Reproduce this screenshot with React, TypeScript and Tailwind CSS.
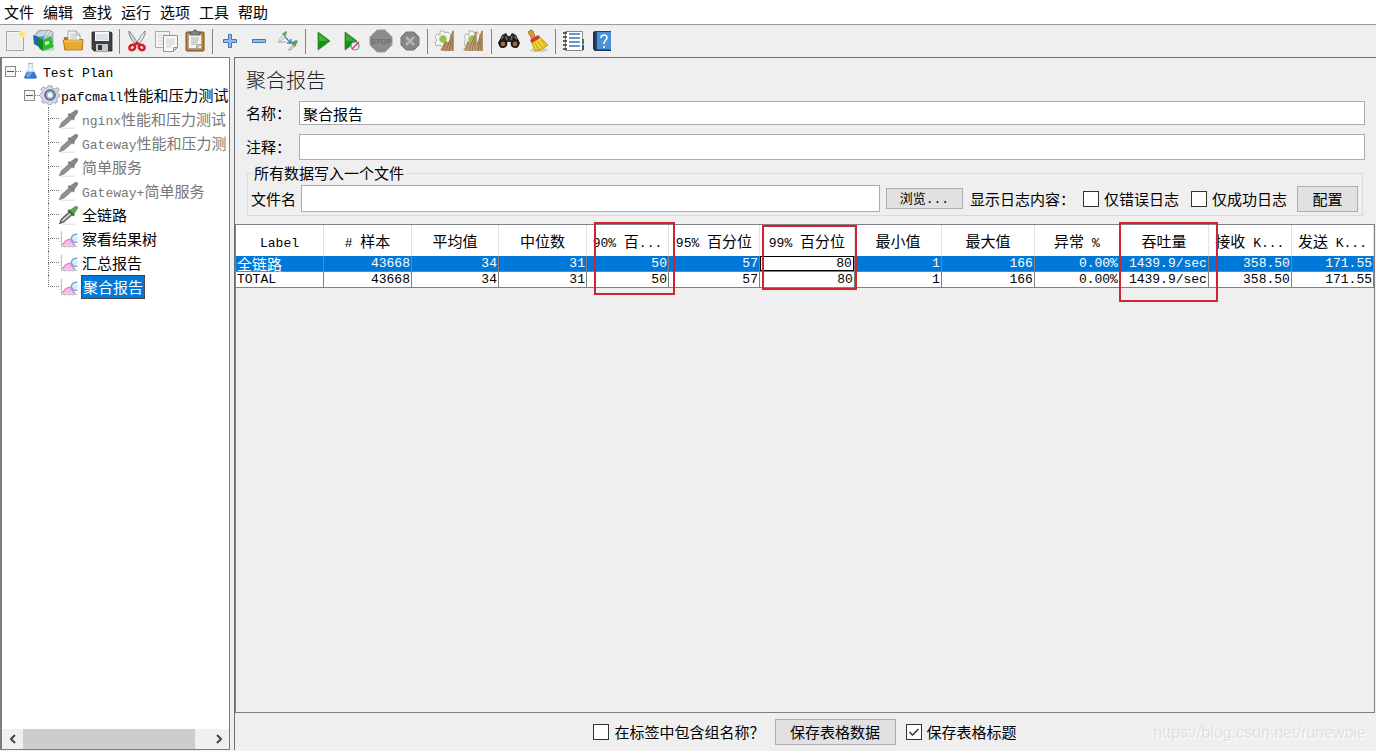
import React from 'react';

type IconProps = { children: React.ReactNode; className?: string };

const Icon: React.FC<IconProps> = ({ children, className = 'size-6' }) => (
  <svg viewBox="0 0 24 24" className={`${className} shrink-0`} fill="none" aria-hidden="true">
    {children}
  </svg>
);

// Latin runs are monospaced and a bit smaller than the Chinese glyphs
const Mixed: React.FC<{ text: string }> = ({ text }) => (
  <>
    {text.split(/([\x20-\x7e]+)/).map((part, i) =>
      i % 2 ? (
        <span key={i} className="font-['Liberation_Mono',monospace] text-[13px] leading-none">{part}</span>
      ) : (
        part
      )
    )}
  </>
);

const NewIcon = () => (
  <Icon>
    <path d="M3.500 2.500h17v19h-17z" fill="#f4f4f4" stroke="#a3a5a3" />
    <path d="M5 4h14v16H5z" fill="#ececec" />
    <circle cx="19" cy="5" r="3.500" fill="#f7ef9a" />
    <path d="M19 2l1 2 2 1-2 1-1 2-1-2-2-1 2-1z" fill="#efe06a" />
  </Icon>
);

const TemplatesIcon = () => (
  <Icon>
    <ellipse cx="15" cy="20" rx="8" ry="2" fill="#d0d4d0" />
    <path d="M3 6l3-4 4-1 2 1 4-1 5 2v11H4z" fill="#b9c7d2" stroke="#7b8e9e" strokeWidth=".7" />
    <path d="M6 7l4-5M9 7l4-5M14 6l3-4M17 7l3-4" stroke="#eef3f6" />
    <path d="M1 6l6 2v10l-5-3z" fill="#1c6dae" />
    <path d="M7 8l5-1v9l-5 2z" fill="#3f9bdc" />
    <path d="M6 8l5 3v11l-4-3z" fill="#168a18" />
    <path d="M11 11l8-4 3 11-11 4z" fill="#31bd31" />
    <path d="M13 13l4-1v3l-4 1z" fill="#d5f7ca" />
  </Icon>
);

const OpenIcon = () => (
  <Icon>
    <path d="M3 8h6l2 2h11v11H3z" fill="#b47a19" />
    <path d="M7 2h8l4 4v9H7z" fill="#fafafa" stroke="#929292" strokeWidth=".8" />
    <path d="M9 5h5M9 7h7M9 9h7" stroke="#a9b0b5" strokeWidth=".8" />
    <path d="M15 2v4h4" stroke="#929292" strokeWidth=".8" />
    <path d="M2 11h20l-1 10H4z" fill="#e7ab35" stroke="#b67818" strokeWidth=".8" />
    <path d="M3 12h18" stroke="#f9d579" />
  </Icon>
);

const SaveIcon = () => (
  <Icon>
    <path d="M2 3h19l1 1v18H4l-2-2z" fill="#3d3f43" stroke="#24262a" strokeWidth=".8" />
    <path d="M5 3h14v9H5z" fill="#f5f7f8" />
    <path d="M6 6h12M6 8h12M6 10h12" stroke="#b6bec4" strokeWidth=".8" />
    <path d="M6 15h12v7H6z" fill="#c6c9cb" />
    <path d="M8 16h4v5H8z" fill="#313439" />
  </Icon>
);

const CutIcon = () => (
  <Icon>
    <path d="M4 2q-1 5 7 14l2-1Q8 6 4 2z" fill="#d9dbdc" stroke="#737678" strokeWidth=".9" />
    <path d="M20 2q1 5-7 14l-2-1Q16 6 20 2z" fill="#eff0f0" stroke="#737678" strokeWidth=".9" />
    <ellipse cx="7" cy="18.500" rx="3" ry="2.500" stroke="#d61f22" strokeWidth="2.600" transform="rotate(-35 7 18)" />
    <ellipse cx="17" cy="18.500" rx="3" ry="2.500" stroke="#d61f22" strokeWidth="2.600" transform="rotate(35 17 18)" />
    <path d="M9 16l3-2 3 2" stroke="#d61f22" strokeWidth="2.400" />
  </Icon>
);

const CopyIcon = () => (
  <Icon>
    <path d="M1.500 2.500h14v16h-14z" fill="#f5f5f5" stroke="#aaa" />
    <path d="M4 6h9M4 9h9M4 12h5M4 15h5" stroke="#cfcfcf" />
    <path d="M9.500 6.500h14v12l-4 4h-10z" fill="#f8f8f8" stroke="#929492" />
    <path d="M12 10h9M12 12h9M12 14h9M12 16h7M12 18h5" stroke="#c2c5c4" strokeWidth=".8" />
    <path d="M19.500 22v-3.500h4z" fill="#ddd" stroke="#929492" />
  </Icon>
);

const PasteIcon = () => (
  <Icon>
    <rect x="3" y="3" width="18" height="19" rx="1" fill="#c08334" stroke="#7a4c18" />
    <path d="M5.500 5.500h13v14h-13z" fill="#f4f4f2" stroke="#9d9b92" strokeWidth=".7" />
    <path d="M8 9h8M8 11h8M8 13h7M8 15h5" stroke="#a9afab" />
    <path d="M13.500 19.500v-4h5z" fill="#cfd1cd" stroke="#8b8d87" strokeWidth=".7" />
    <path d="M7 3h3l1-2h2l1 2h3v3H7z" fill="#858985" stroke="#4e514f" strokeWidth=".8" />
  </Icon>
);

const PlusIcon = () => (
  <Icon>
    <path d="M10.500 5.500h3v5h5v3h-5v5h-3v-5h-5v-3h5z" fill="#91bce8" stroke="#3f76b9" />
  </Icon>
);

const MinusIcon = () => (
  <Icon>
    <path d="M5.500 10.500h13v3h-13z" fill="#91bce8" stroke="#3f76b9" />
  </Icon>
);

const ToggleIcon = () => (
  <Icon>
    <path d="M2 12l6-7 2 2-6 6z" fill="#dce8df" stroke="#9cada1" strokeWidth=".7" />
    <path d="M7 4l3-2 1 1-1 4-1 1-3-3z" fill="#6aa66c" />
    <path d="M12 21l6-7 2 2-5 5z" fill="#c8d4ca" stroke="#9cada1" strokeWidth=".7" />
    <path d="M16 13l4-2 2 1-2 4-1 2-4-4z" fill="#5d9e5c" />
    <path d="M2 13h8" stroke="#9ba7a0" />
    <path d="M9 8l6 6M15 10v4h-4" stroke="#397cc6" strokeWidth="1.400" />
  </Icon>
);

const StartIcon = () => (
  <Icon>
    <path d="M7 3l12 9-12 9z" fill="#11950f" stroke="#267b28" strokeWidth=".7" />
    <path d="M8 5l9 7H8z" fill="#42b33d" />
  </Icon>
);

const StartNoPauseIcon = () => (
  <Icon>
    <path d="M5 3l12 9-12 9z" fill="#11950f" stroke="#267b28" strokeWidth=".7" />
    <path d="M6 5l9 7H6z" fill="#3fa642" />
    <circle cx="15" cy="17" r="4" fill="#e9edf5" stroke="#728bb5" strokeWidth="1.200" />
    <path d="M12 20l7-7" stroke="#dc3c35" strokeWidth="1.500" />
  </Icon>
);

const StopIcon = () => (
  <Icon>
    <path d="M8 1h8l7 7v8l-7 7H8l-7-7V8z" fill="#8c8c8c" stroke="#9c9c9c" />
    <text x="12" y="15" fontSize="8" fontWeight="700" textAnchor="middle" fill="#6c6c6c" fontFamily="Liberation Sans">STOP</text>
  </Icon>
);

const ShutdownIcon = () => (
  <Icon>
    <path d="M8 3h8l5 5v8l-5 5H8l-5-5V8z" fill="#858585" stroke="#777" />
    <path d="M8 8l8 8M16 8l-8 8" stroke="#b2b2b2" strokeWidth="2.600" />
  </Icon>
);

const ClearIcon: React.FC<{ all?: boolean }> = ({ all }) => (
  <Icon>
    <path
      d="M7 2h4l1 2 3-1 3 3-1 3 2 2-2 4-3 1-1 3-4-1-2-2-4 1-1-4 2-2-2-3 2-3 3 1z"
      fill="#f6f6f4"
      stroke="#a9aaa6"
      strokeWidth=".9"
    />
    <circle cx="10" cy="10" r="3.500" fill="#8cc63f" stroke="#b4cf8c" />
    <path d="M11 12l5 1 4-12 1 1v20H10l-3-1q3-3 4-9z" fill="#b9936a" />
    <path d="M10 21l3-8M13 22l3-9M16 22l2-10M19 21V8M16 13l4-11" stroke="#896647" strokeWidth=".8" />
    {all && (
      <>
        <path d="M5 12l5 1 4-11 1 1v19H4l-3-1q3-3 4-9z" fill="#c2a07a" />
        <path d="M4 21l3-8M7 22l3-9M10 22l2-10M13 21V8M10 13l4-10" stroke="#906b4a" strokeWidth=".8" />
      </>
    )}
  </Icon>
);

const SearchIcon = () => (
  <Icon>
    <path d="M5 6l4-2 2 3h2l2-3 4 2 4 8-3 5-5-2-1-4h-4l-1 4-5 2-3-5z" fill="#292929" />
    <path d="M6 7l-2 5M18 7l2 5M9 7l1 4M15 7l-1 4" stroke="#747474" strokeWidth="1.300" />
    <circle cx="6" cy="14.500" r="4" fill="#242424" stroke="#111" />
    <circle cx="18" cy="14.500" r="4" fill="#242424" stroke="#111" />
    <circle cx="6" cy="15" r="2.200" fill="#a46e42" />
    <circle cx="18" cy="15" r="2.200" fill="#a46e42" />
  </Icon>
);

const BroomIcon = () => (
  <Icon>
    <ellipse cx="13" cy="21" rx="9" ry="2" fill="#cfcfcf" />
    <path d="M2 3l3-2 2 1 2 6-3 2z" fill="#d89a36" stroke="#996018" strokeWidth=".8" />
    <path d="M5 12l8-5 9 9q-6 6-13 6z" fill="#eed132" stroke="#b58a14" strokeWidth=".8" />
    <path d="M4 11l8-5 2 3-8 5z" fill="#cf392c" />
    <path d="M9 14l4 7M12 13l5 6M15 11l5 6" stroke="#b49319" strokeWidth=".8" />
  </Icon>
);

const FunctionIcon = () => (
  <Icon>
    <path d="M4.500 2.500h17v19h-17z" fill="#fff" stroke="#888" />
    <path d="M8 5h11M8 9h11M8 13h11M8 17h11" stroke="#3975b8" strokeWidth="1.500" />
    <path d="M2 4h4M2 8h4M2 12h4M2 16h4M2 20h4" stroke="#333" strokeWidth="1.300" />
    <path d="M21 10h2v5h-2z" fill="#259036" />
    <path d="M21 16h2v5h-2z" fill="#195ca6" />
  </Icon>
);

const HelpIcon = () => (
  <Icon>
    <path d="M3 3l2-1h16v20H5l-2-2z" fill="#214366" />
    <path d="M7 3h14v18H7z" fill="#4d90d9" />
    <path d="M4 3v17M4 21h17" stroke="#192f47" />
    <path d="M11 9q0-3 3-3 3 0 3 3 0 1-2 3-1 1-1 3M14 17v2" stroke="#fff" strokeWidth="1.600" />
  </Icon>
);

const FlaskIcon = () => (
  <Icon className="h-5 w-[15px]">
    <path d="M9 0h6v8l7 14q0 2-3 2H5q-3 0-3-2L9 8z" fill="#edf4f8" stroke="#a7b9c5" />
    <path d="M6 13h12l4 9q0 2-3 2H5q-3 0-3-2z" fill="#2c7bd0" />
    <path d="M7 14h8l-4 7H5z" fill="#67aae8" />
    <path d="M8 0h8" stroke="#a7b9c5" strokeWidth="2" />
  </Icon>
);

const GearIcon = () => (
  <Icon className="size-5">
    <path
      d="M10 1h4l1 3 3 1 3-2 2 3-2 3 1 2 2 1v2l-3 1-1 2 1 3-2 2-3-1-2 1-1 2h-3l-1-2-2-1-3 1-2-2 1-3-1-2-3-1v-3l3-1 1-2-2-3 3-3 3 2 2-1z"
      fill="#d5d9df"
      stroke="#8f98a5"
    />
    <circle cx="12" cy="12" r="6" fill="#9dadc4" stroke="#526b91" strokeWidth="2" />
    <circle cx="12" cy="12" r="3" fill="#f8fafe" />
  </Icon>
);

const PipetteIcon: React.FC<{ off?: boolean }> = ({ off }) => (
  <Icon className="size-5">
    <path d="M3 23h16" stroke="#e3e3e3" strokeWidth="1.500" />
    <path d="M1 22l2-5L13 8l3 3L6 20z" fill={off ? '#929292' : '#c8cec9'} stroke={off ? '#888' : '#525852'} strokeWidth="1.500" />
    <path d="M12 6l2-1 6-4q3 0 3 3l-4 6-1 3z" fill={off ? '#858585' : '#5ba64b'} />
    <path d="M11 6l7 7" stroke={off ? '#858585' : '#356c2e'} strokeWidth="2.500" />
  </Icon>
);

const ReportIcon = () => (
  <Icon className="size-5">
    <path d="M4 20q1-6 4-5 4-5 6-2l7 7z" fill="#f4bce9" />
    <path d="M22 6q-7 0-7 5 0 4 5 5h2z" fill="#d8effb" />
    <path d="M22 6q-7 0-7 5 0 4 5 5h2" stroke="#6da3da" strokeWidth="1.500" />
    <path d="M4 19l4-5 5-2 6 8" stroke="#d87bc9" strokeWidth="1.500" />
    <path d="M3 2v19h19" stroke="#b3b3bb" />
    <path d="M1 5h2M1 10h2M1 15h2M7 21v2M12 21v2M17 21v2" stroke="#c4c4cb" />
  </Icon>
);

const toolGroups: { label: string; icon: React.ReactNode }[][] = [
  [
    { label: '新建', icon: <NewIcon /> },
    { label: '模板', icon: <TemplatesIcon /> },
    { label: '打开', icon: <OpenIcon /> },
    { label: '保存', icon: <SaveIcon /> },
  ],
  [
    { label: '剪切', icon: <CutIcon /> },
    { label: '复制', icon: <CopyIcon /> },
    { label: '粘贴', icon: <PasteIcon /> },
  ],
  [
    { label: '展开', icon: <PlusIcon /> },
    { label: '折叠', icon: <MinusIcon /> },
    { label: '切换', icon: <ToggleIcon /> },
  ],
  [
    { label: '启动', icon: <StartIcon /> },
    { label: '不停顿开始', icon: <StartNoPauseIcon /> },
    { label: '停止', icon: <StopIcon /> },
    { label: '关闭', icon: <ShutdownIcon /> },
  ],
  [
    { label: '清除', icon: <ClearIcon /> },
    { label: '清除全部', icon: <ClearIcon all /> },
  ],
  [
    { label: '查找', icon: <SearchIcon /> },
    { label: '重置查找', icon: <BroomIcon /> },
  ],
  [
    { label: '函数助手', icon: <FunctionIcon /> },
    { label: '帮助', icon: <HelpIcon /> },
  ],
];

const menus = ['文件', '编辑', '查找', '运行', '选项', '工具', '帮助'];

const treeItems = [
  { text: 'nginx性能和压力测试', icon: <PipetteIcon off />, off: true },
  { text: 'Gateway性能和压力测', icon: <PipetteIcon off />, off: true },
  { text: '简单服务', icon: <PipetteIcon off />, off: true },
  { text: 'Gateway+简单服务', icon: <PipetteIcon off />, off: true },
  { text: '全链路', icon: <PipetteIcon /> },
  { text: '察看结果树', icon: <ReportIcon /> },
  { text: '汇总报告', icon: <ReportIcon /> },
  { text: '聚合报告', icon: <ReportIcon />, selected: true },
];

const columns = [
  { title: 'Label', width: 88 },
  { title: '# 样本', width: 88 },
  { title: '平均值', width: 87 },
  { title: '中位数', width: 88 },
  { title: '90% 百...', width: 82, mark: '-top-[3px] left-[7px] h-[73px] w-[81px]' },
  { title: '95% 百分位', width: 91 },
  { title: '99% 百分位', width: 95, mark: 'top-0 left-0.5 h-[65px] w-[95px]' },
  { title: '最小值', width: 87 },
  { title: '最大值', width: 93 },
  { title: '异常 %', width: 85 },
  { title: '吞吐量', width: 89, mark: '-top-[3px] -left-px h-20 w-[99px]' },
  { title: '接收 K...', width: 83 },
  { title: '发送 K...', width: 82 },
];
const totalWidth = columns.reduce((sum, c) => sum + c.width, 0);

const values = ['43668', '34', '31', '50', '57', '80', '1', '166', '0.00%', '1439.9/sec', '358.50', '171.55'];
const rows = [
  ['全链路', ...values],
  ['TOTAL', ...values],
];

const Expander = () => (
  <button
    type="button"
    aria-label="折叠"
    className="flex size-[11px] shrink-0 items-center justify-center border border-[#8c8c8c] bg-[#f5f5f5]"
  >
    <span className="h-px w-[7px] bg-[#3f5ea0]" />
  </button>
);

const Check: React.FC<{ label: string; checked?: boolean }> = ({ label, checked }) => (
  <label className="flex shrink-0 items-center gap-[5px]">
    <span className="relative flex size-4">
      <input
        type="checkbox"
        defaultChecked={checked}
        className="peer size-4 appearance-none border border-[#333] bg-white"
      />
      <svg viewBox="0 0 16 16" className="pointer-events-none absolute inset-0 hidden size-4 peer-checked:block" fill="none">
        <path d="M3.500 8l3 3 6-6" stroke="#333" strokeWidth="1.500" />
      </svg>
    </span>
    {label}
  </label>
);

const Tree = () => (
  <aside className="flex w-[230px] shrink-0 flex-col border border-l-2 border-[#7a7a80] bg-white">
    <div className="min-h-0 flex-1 overflow-hidden pt-px whitespace-nowrap">
      <div className="flex h-6 items-center pl-[3px]">
        <Expander />
        <span className="mr-0.5 w-[5px] shrink-0 border-t border-dotted border-[#777]" />
        <FlaskIcon />
        <span className="pl-[5px]"><Mixed text="Test Plan" /></span>
      </div>
      <div className="flex h-6 items-center pl-[22px]">
        <Expander />
        <span className="w-[5px] shrink-0 border-t border-dotted border-[#777]" />
        <GearIcon />
        <span className="pl-px"><Mixed text="pafcmall性能和压力测试" /></span>
      </div>
      {treeItems.map((item, i) => (
        <div key={item.text} className="flex h-6 items-center pl-[46px]">
          <span className="flex w-[11px] shrink-0 flex-col self-stretch">
            <span className="h-1/2 border-b border-l border-dotted border-[#777]" />
            {i < treeItems.length - 1 && <span className="h-1/2 border-l border-dotted border-[#777]" />}
          </span>
          {item.icon}
          <span
            className={
              item.selected
                ? 'ml-0.5 flex h-6 items-center border border-dotted border-[#333] bg-[#0078d7] px-px text-white'
                : item.off
                  ? 'pl-[3px] text-[#777]'
                  : 'pl-[3px]'
            }
          >
            <Mixed text={item.text} />
          </span>
        </div>
      ))}
    </div>
    <div className="flex h-5 items-center bg-[#f0f0f0]">
      <button type="button" aria-label="向左滚动" className="flex w-[21px] justify-center">
        <svg viewBox="0 0 8 10" className="h-2.5 w-2" fill="none"><path d="M6 1L2 5l4 4" stroke="#444" strokeWidth="2" /></svg>
      </button>
      <div className="flex h-full flex-1">
        <div className="h-full w-[172px] bg-[#cdcdcd]" />
      </div>
      <button type="button" aria-label="向右滚动" className="flex w-[21px] justify-center">
        <svg viewBox="0 0 8 10" className="h-2.5 w-2" fill="none"><path d="M2 1l4 4-4 4" stroke="#444" strokeWidth="2" /></svg>
      </button>
    </div>
  </aside>
);

const ResultTable = () => (
  <table className="w-full table-fixed border-separate border-spacing-0">
    <colgroup>
      {columns.map((c) => (
        <col key={c.title} style={{ width: `${(c.width / totalWidth) * 100}%` }} />
      ))}
    </colgroup>
    <thead>
      <tr className="bg-white">
        {columns.map((c) => (
          <th key={c.title} className="relative h-[31px] border-r border-[#e2e2e2] p-0 text-center font-normal whitespace-nowrap">
            <Mixed text={c.title} />
            {c.mark && <span className={`pointer-events-none absolute z-10 border-2 border-[#cf2530] ${c.mark}`} />}
          </th>
        ))}
      </tr>
    </thead>
    <tbody>
      {rows.map((row, r) => (
        <tr key={row[0]} className={r === 0 ? 'bg-[#0078d7] text-white' : 'bg-white'}>
          {row.map((value, i) => (
            <td key={i} className="border-r border-b border-[#808080] p-0 whitespace-nowrap">
              <div
                className={
                  r === 0 && i === 6
                    ? 'flex h-[15px] items-center justify-end border border-black bg-white px-px text-black'
                    : i === 0
                      ? 'flex h-[15px] items-center px-px'
                      : 'flex h-[15px] items-center justify-end px-px'
                }
              >
                <Mixed text={value} />
              </div>
            </td>
          ))}
        </tr>
      ))}
    </tbody>
  </table>
);

const ReportPanel = () => (
  <main className="flex min-w-0 flex-1 flex-col border-t border-l border-[#6e6e72] pr-px">
    <div className="pr-2.5 pl-[11px]">
      <h1 className="flex h-[43px] items-center text-[20px] font-light text-[#222]">聚合报告</h1>
      <div className="flex items-center">
        <label htmlFor="name" className="w-[53px]">名称：</label>
        <input id="name" defaultValue="聚合报告" className="h-6 min-w-0 flex-1 border border-[#ababab] bg-white px-[3px]" />
      </div>
      <div className="mt-[9px] flex items-center">
        <label htmlFor="comment" className="w-[53px]">注释：</label>
        <input id="comment" className="h-[26px] min-w-0 flex-1 border border-[#ababab] bg-white px-[3px]" />
      </div>
      <fieldset className="mt-[3px] mr-0.5 ml-px border border-[#dadada] pr-1 pb-[3px] pl-[3px]">
        <legend className="h-5 px-[3px] leading-5">所有数据写入一个文件</legend>
        <div className="flex items-center pt-0.5">
          <label htmlFor="file" className="w-[50px] shrink-0">文件名</label>
          <input id="file" className="h-[27px] min-w-0 flex-1 border border-[#ababab] bg-white px-[3px]" />
          <button type="button" className="ml-1.5 h-[21px] w-[77px] border border-[#adadad] bg-[#e1e1e1] text-[13px] leading-none">
            <Mixed text="浏览..." />
          </button>
          <span className="ml-[7px] w-[113px] shrink-0">显示日志内容：</span>
          <Check label="仅错误日志" />
          <span className="w-3 shrink-0" />
          <Check label="仅成功日志" />
          <button type="button" className="ml-2.5 h-[26px] w-[61px] border border-[#adadad] bg-[#e1e1e1] leading-none">配置</button>
        </div>
      </fieldset>
    </div>
    <div className="mt-2 min-h-0 flex-1 border border-[#7f8085]">
      <ResultTable />
    </div>
    <div className="flex h-[37px] shrink-0 items-center justify-center gap-2.5">
      <Check label="在标签中包含组名称？" />
      <button type="button" className="h-[26px] w-[121px] border border-[#adadad] bg-[#e1e1e1] leading-none">保存表格数据</button>
      <Check label="保存表格标题" checked />
    </div>
  </main>
);

const App: React.FC = () => (
  <div className="relative flex h-screen flex-col overflow-hidden bg-[#efefef] font-['Noto_Sans_CJK_SC',sans-serif] text-[15px] leading-5 text-black">
    <nav className="flex h-[25px] shrink-0 items-center gap-[9px] border-b border-[#999] bg-white pl-1">
      {menus.map((m) => (
        <button key={m} type="button">{m}</button>
      ))}
    </nav>

    {/* Toolbar */}
    <div className="flex h-8 shrink-0 items-center">
      {toolGroups.map((group, g) => (
        <React.Fragment key={g}>
          {g > 0 && (
            <span className="flex w-1.5 justify-center">
              <span className="h-[25px] w-px bg-[#858585]" />
            </span>
          )}
          {group.map((tool) => (
            <button key={tool.label} type="button" aria-label={tool.label} className="flex w-[29px] justify-center">
              {tool.icon}
            </button>
          ))}
        </React.Fragment>
      ))}
    </div>

    <div className="flex min-h-0 flex-1 gap-1 pb-px">
      <Tree />
      <ReportPanel />
    </div>

    <span className="pointer-events-none absolute right-2.5 bottom-2 font-['Liberation_Sans',sans-serif] text-[16px] text-[#e0e0e0] [text-shadow:1px_1px_0_#fff]">
      https://blog.csdn.net/runewbie
    </span>
  </div>
);

export default App;
